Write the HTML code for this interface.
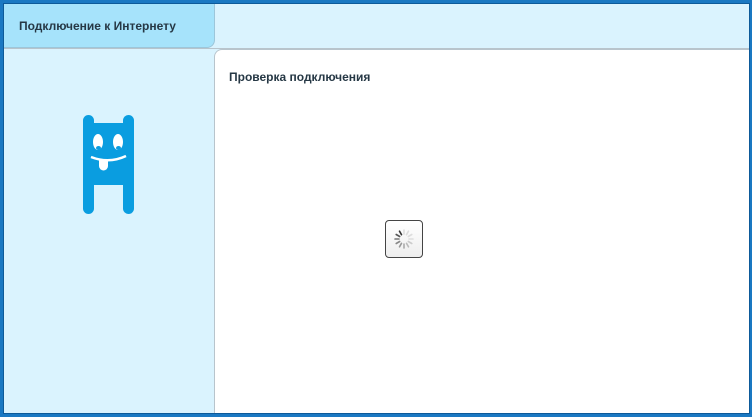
<html><head><style>
body{margin:0;width:752px;height:417px;overflow:hidden;background:#1a78c2;font-family:"Liberation Sans",Arial,sans-serif}
.f{position:absolute;left:3px;top:3px;width:745px;height:409px;border:1px solid #0d5a99;background:#daf3fe;overflow:hidden}
.top{position:absolute;left:0;top:0;width:745px;height:44px;border-bottom:1px solid #b8c4cc}
.tab{position:absolute;left:0;top:0;width:211px;height:44px;background:#a6e3fb;border-bottom-right-radius:8px;border-right:1px solid #9cc6da;border-bottom:1px solid #9cc6da;font-size:12px;font-weight:bold;color:#263845;line-height:44px;padding-left:15px;box-sizing:border-box}
.main{position:absolute;left:210px;top:45px;width:540px;height:370px;background:#fff;border-left:1px solid #b8c4cc;border-top:1px solid #b8c4cc;border-top-left-radius:8px}
.h{position:absolute;left:14px;top:20px;font-size:12px;font-weight:bold;color:#263845}
.sp{position:absolute;left:170px;top:170px;width:38px;height:38px;border:1px solid #444;border-radius:4px;background:linear-gradient(#fff,#eee);box-sizing:border-box}
</style></head><body><div class="f">
<div class="top"></div>
<div class="tab">Подключение к Интернету</div>
<svg style="position:absolute;left:78px;top:110px" width="56" height="102" viewBox="0 0 56 102">
<g fill="#0a9de0"><rect x="1" y="1" width="11" height="99" rx="5.5"/><rect x="41" y="1" width="11" height="99" rx="5.5"/><rect x="1" y="9" width="51" height="62"/></g>
<g fill="#fff"><ellipse cx="16" cy="28" rx="5" ry="8"/><ellipse cx="36" cy="28" rx="5" ry="8"/><path d="M17 46h9v6a4.5 4.5 0 0 1-9 0z"/></g>
<g fill="#0a9de0"><ellipse cx="16.5" cy="34" rx="2.5" ry="2"/><ellipse cx="36.5" cy="34" rx="2.5" ry="2"/></g>
<path d="M9 43q18 7 35 -1" stroke="#fff" stroke-width="2.5" fill="none"/>
</svg>
<div class="main"><div class="h">Проверка подключения</div>
<div class="sp"><svg width="36" height="36" viewBox="-18 -18 36 36"><g stroke-width="1.6" stroke-linecap="round">
<line x1="0" y1="-5" x2="0" y2="-9" stroke="#333" transform="rotate(-30)"/>
<line x1="0" y1="-5" x2="0" y2="-9" stroke="#555" transform="rotate(-60)"/>
<line x1="0" y1="-5" x2="0" y2="-9" stroke="#777" transform="rotate(-90)"/>
<line x1="0" y1="-5" x2="0" y2="-9" stroke="#888" transform="rotate(-120)"/>
<line x1="0" y1="-5" x2="0" y2="-9" stroke="#999" transform="rotate(-150)"/>
<line x1="0" y1="-5" x2="0" y2="-9" stroke="#aaa" transform="rotate(180)"/>
<line x1="0" y1="-5" x2="0" y2="-9" stroke="#bbb" transform="rotate(150)"/>
<line x1="0" y1="-5" x2="0" y2="-9" stroke="#ccc" transform="rotate(120)"/>
<line x1="0" y1="-5" x2="0" y2="-9" stroke="#ddd" transform="rotate(90)"/>
<line x1="0" y1="-5" x2="0" y2="-9" stroke="#ddd" transform="rotate(60)"/>
<line x1="0" y1="-5" x2="0" y2="-9" stroke="#ddd" transform="rotate(30)"/>
<line x1="0" y1="-5" x2="0" y2="-9" stroke="#ddd"/>
</g></svg></div>
</div>
</div></body></html>
